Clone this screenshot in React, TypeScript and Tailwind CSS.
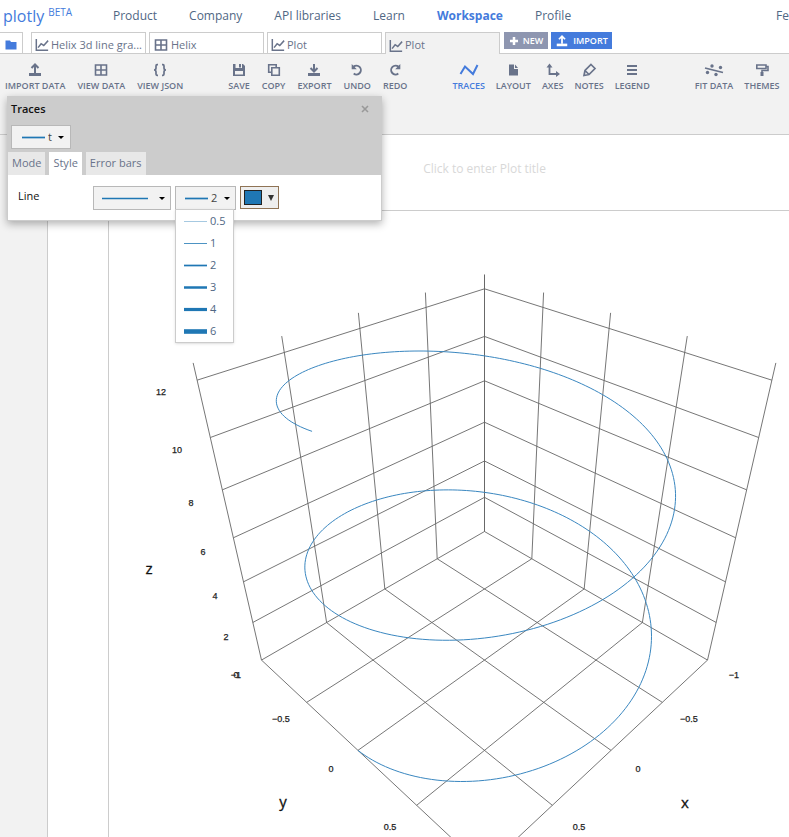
import React from "react";

/* ---------- icons ---------- */

type IconProps = { className?: string };

const Svg = ({ className = "w-4 h-4", box = "0 0 16 16", children }: { className?: string; box?: string; children: React.ReactNode }) => (
  <svg viewBox={box} className={className + " shrink-0"} fill="none" stroke="currentColor" strokeWidth="2" aria-hidden="true">
    {children}
  </svg>
);

const UploadIcon = ({ className }: IconProps) => (
  <Svg className={className}>
    <path d="M8 11V3M4.500 6L8 2.500L11.500 6" />
    <path d="M2 12.500H14" strokeWidth="3" />
  </Svg>
);
const DownloadIcon = () => (
  <Svg>
    <path d="M8 2V9M4.500 6L8 9.500L11.500 6" />
    <path d="M2 12.500H14" strokeWidth="3" />
  </Svg>
);
const GridIcon = ({ className }: IconProps) => (
  <Svg className={className}>
    <path d="M2.500 3H13.500V13H2.500ZM8 3V13M2.500 8H13.500" strokeWidth="1.600" />
  </Svg>
);
const BracesIcon = () => (
  <Svg>
    <path d="M6 2.700H5Q4 2.700 4 4V6Q4 8 2 8Q4 8 4 10V12Q4 13.300 5 13.300H6M10 2.700H11Q12 2.700 12 4V6Q12 8 14 8Q12 8 12 10V12Q12 13.300 11 13.300H10" strokeWidth="1.700" />
  </Svg>
);
const SaveIcon = () => (
  <Svg>
    <path fillRule="evenodd" fill="currentColor" stroke="none" d="M2 2H12L14 4V14H2ZM4 9V12.500H12V9ZM4.500 2V6H11V2Z" />
    <path fill="currentColor" stroke="none" d="M8 2H10V5.500H8Z" />
  </Svg>
);
const CopyIcon = () => (
  <Svg>
    <path d="M5.800 5.800H13.300V13.300H5.800ZM5.500 10.200H2.700V2.700H10.200V5.500" strokeWidth="1.600" />
  </Svg>
);
const UndoIcon = () => (
  <Svg>
    <path d="M4.500 4.800A4.400 4.400 0 1 1 4.700 11.500" strokeWidth="1.900" />
    <path d="M2.700 2V7.200H7.800Z" fill="currentColor" stroke="none" />
  </Svg>
);
const RedoIcon = () => (
  <Svg>
    <path d="M11.500 4.800A4.400 4.400 0 1 0 11.300 11.500" strokeWidth="1.900" />
    <path d="M13.300 2V7.200H8.200Z" fill="currentColor" stroke="none" />
  </Svg>
);
const TracesIcon = () => (
  <Svg className="w-5 h-4" box="0 0 20 16">
    <path d="M1.500 12L6 4.500L14 12L18.500 3" />
  </Svg>
);
const LayoutIcon = () => (
  <Svg>
    <path d="M4 2.500H9V7H13V13.500H4ZM10 2.500L13 6H10Z" fill="currentColor" stroke="none" />
  </Svg>
);
const AxesIcon = () => (
  <Svg>
    <path d="M4.500 4V12H12" strokeWidth="1.800" />
    <path d="M4.500 1.500L7.500 5.500H1.500ZM15 12L11 9V15Z" fill="currentColor" stroke="none" />
  </Svg>
);
const NotesIcon = () => (
  <Svg>
    <path d="M10 2.500L14 6.500L8 12.500L3 13.500L4 8.500ZM4 8.500L8 12.500" strokeWidth="1.700" />
  </Svg>
);
const LegendIcon = () => (
  <Svg>
    <path d="M3 4H13M3 8H13M3 12H13" strokeWidth="1.900" />
  </Svg>
);
const FitIcon = () => (
  <Svg className="w-5 h-4" box="0 0 20 16">
    <path d="M1 6L19 10.500" strokeWidth="1.800" />
    <g fill="currentColor" stroke="none">
      <circle cx="8" cy="4" r="1.700" />
      <circle cx="16.500" cy="5.500" r="1.700" />
      <circle cx="3.500" cy="10.500" r="1.700" />
      <circle cx="12" cy="12.500" r="1.700" />
    </g>
  </Svg>
);
const ThemesIcon = () => (
  <Svg>
    <path d="M2.800 3H12V6.500H2.800ZM12 4.500H14V8.500H8V11" strokeWidth="1.600" />
    <path d="M6.500 10H9.500V14H6.500Z" fill="currentColor" stroke="none" />
  </Svg>
);
const ChartIcon = () => (
  <Svg className="w-3.5 h-3.5">
    <path d="M1.500 1V14H15" strokeWidth="1.700" />
    <path d="M3.500 11L7 6.500L10 8.500L15 3" strokeWidth="1.700" />
  </Svg>
);

/* ---------- header ---------- */

const NavLink = ({ active, children }: { active?: boolean; children: string }) => (
  <a href="#" className={active ? "font-bold text-[#447bdc]" : "text-[#506784]"}>
    {children}
  </a>
);

const Header = () => (
  <header className="flex h-8 items-center overflow-hidden whitespace-nowrap pl-[3px] text-xs">
    <a href="#" className="flex w-[110px] shrink-0 items-center gap-1 text-[#447bdc]">
      <span className="text-base leading-8">plotly</span>
      <span className="pb-1.5 text-[10px]">BETA</span>
    </a>
    <nav className="flex gap-8">
      <NavLink>Product</NavLink>
      <NavLink>Company</NavLink>
      <NavLink>API libraries</NavLink>
      <NavLink>Learn</NavLink>
      <NavLink active>Workspace</NavLink>
      <NavLink>Profile</NavLink>
    </nav>
    <a href="#" className="ml-auto text-[#506784]">
      Fe
    </a>
  </header>
);

const FileTab = ({ icon, label, active }: { icon: React.ReactNode; label: string; active?: boolean }) => (
  <button
    className={
      "flex w-[115px] shrink-0 items-center gap-0.5 border border-b-0 border-[#ccc] px-[3px] pt-1 text-[11px] " +
      (active ? "-mb-px bg-[#f2f2f2]" : "bg-white")
    }
  >
    {icon}
    <span className="whitespace-nowrap">{label}</span>
  </button>
);

const FileTabs = () => (
  <div className="flex h-[22px] border-b border-[#ccc] text-[#69738a]">
    <button aria-label="Files" className="mr-2 flex w-[23px] shrink-0 items-center justify-center border border-b-0 border-l-0 border-[#ccc] pt-1 text-[#447bdc]">
      <svg viewBox="0 0 12 10" className="h-2.5 w-3" fill="currentColor" aria-hidden="true">
        <path d="M0.500 0.500H5L6 2H11.500V9.500H0.500Z" />
      </svg>
    </button>
    <div className="flex gap-[3px]">
      <FileTab icon={<ChartIcon />} label="Helix 3d line gra..." />
      <FileTab icon={<GridIcon className="h-4 w-4" />} label="Helix" />
      <FileTab icon={<ChartIcon />} label="Plot" />
      <FileTab icon={<ChartIcon />} label="Plot" active />
    </div>
    <div className="ml-1 flex h-[17px] gap-[3px] text-[9px] font-semibold text-white">
      <button className="flex w-11 items-center justify-center gap-1 bg-[#8e96b0] pt-px">
        <svg viewBox="0 0 10 10" className="h-2.5 w-2.5" stroke="currentColor" strokeWidth="2.500" aria-hidden="true">
          <path d="M5 1V9M1 5H9" />
        </svg>
        NEW
      </button>
      <button className="flex w-[61px] items-center justify-center gap-1 bg-[#447bdc] pt-px">
        <UploadIcon className="h-3.5 w-3.5" />
        IMPORT
      </button>
    </div>
  </div>
);

/* ---------- toolbar ---------- */

type Tool = { label: string; icon: React.ReactNode; active?: boolean };

const toolGroups: { gap: string; tools: Tool[] }[] = [
  {
    gap: "gap-3",
    tools: [
      { label: "IMPORT DATA", icon: <UploadIcon /> },
      { label: "VIEW DATA", icon: <GridIcon /> },
      { label: "VIEW JSON", icon: <BracesIcon /> },
    ],
  },
  {
    gap: "gap-3",
    tools: [
      { label: "SAVE", icon: <SaveIcon /> },
      { label: "COPY", icon: <CopyIcon /> },
      { label: "EXPORT", icon: <DownloadIcon /> },
      { label: "UNDO", icon: <UndoIcon /> },
      { label: "REDO", icon: <RedoIcon /> },
    ],
  },
  {
    gap: "gap-[11px]",
    tools: [
      { label: "TRACES", icon: <TracesIcon />, active: true },
      { label: "LAYOUT", icon: <LayoutIcon /> },
      { label: "AXES", icon: <AxesIcon /> },
      { label: "NOTES", icon: <NotesIcon /> },
      { label: "LEGEND", icon: <LegendIcon /> },
    ],
  },
  {
    gap: "gap-[11px]",
    tools: [
      { label: "FIT DATA", icon: <FitIcon /> },
      { label: "THEMES", icon: <ThemesIcon /> },
    ],
  },
];

const Toolbar = () => (
  <div className="flex h-[81px] items-start gap-[45px] overflow-hidden border-b border-[#ccc] bg-[#f2f2f2] pl-[5px] pt-2">
    {toolGroups.map((group, i) => (
      <div key={i} className={"flex " + group.gap}>
        {group.tools.map((tool) => (
          <button
            key={tool.label}
            className={
              "flex flex-col items-center gap-0.5 whitespace-nowrap text-[9px] font-semibold leading-3 " +
              (tool.active ? "text-[#447bdc]" : "text-[#69738a]")
            }
          >
            {tool.icon}
            {tool.label}
          </button>
        ))}
      </div>
    ))}
  </div>
);

/* ---------- traces panel ---------- */

const LineSample = ({ width, className = "w-[23px]" }: { width: number; className?: string }) => (
  <svg className={"h-[9px] shrink-0 " + className} aria-hidden="true">
    <line x1="0" x2="100%" y1="4.500" y2="4.500" stroke="#1f77b4" strokeWidth={width} />
  </svg>
);

const Caret = () => <span className="border-x-[3px] border-t-[3px] border-x-transparent border-t-black" />;

const lineWidths = [
  { value: "0.5", stroke: 0.4 },
  { value: "1", stroke: 0.8 },
  { value: "2", stroke: 1.7 },
  { value: "3", stroke: 2.5 },
  { value: "4", stroke: 3.2 },
  { value: "6", stroke: 4.6 },
];

const tabClass = "h-[23px] px-1 text-[11px] ";

const TracesPanel = () => (
  <section className="absolute left-[7px] top-24 z-10 w-[375px] border border-[#ccc] bg-white text-[11px] shadow-[0_3px_8px_rgba(0,0,0,0.3)]">
    <div className="bg-[#ccc] pl-[3px]">
      <div className="flex h-7 items-center justify-between pb-1 pr-3">
        <h2 className="font-semibold text-[#111]">Traces</h2>
        <button aria-label="Close" className="text-[#999]">
          <svg viewBox="0 0 8 8" className="h-2 w-2" stroke="currentColor" strokeWidth="1.600" aria-hidden="true">
            <path d="M1 1L7 7M7 1L1 7" />
          </svg>
        </button>
      </div>
      <label className="relative flex h-6 w-[60px] items-center border border-[#b8b8b8] bg-[#f2f2f2]">
        <span className="absolute left-2.5 flex">
          <LineSample width={1.7} />
        </span>
        <select aria-label="Trace" className="h-full w-full appearance-none pl-9 text-[11px] text-[#444]">
          <option>t</option>
        </select>
        <span className="pointer-events-none absolute right-1.5 flex">
          <Caret />
        </span>
      </label>
      <div className="-ml-[3px] flex gap-1 pt-[3px] text-[#69738a]">
        <button className={tabClass + "bg-[#e8e8e8]"}>Mode</button>
        <button className={tabClass + "bg-white"}>Style</button>
        <button className={tabClass + "bg-[#e8e8e8]"}>Error bars</button>
      </div>
    </div>
    <div className="flex h-[45px] items-start gap-1 pl-2.5 pt-[11px]">
      <span className="w-[71px] pt-0.5 text-[#111]">Line</span>
      <button aria-label="Line pattern" aria-haspopup="listbox" className="flex h-6 w-[78px] items-center justify-between border border-[#b8b8b8] bg-[#f2f2f2] pl-2 pr-[5px]">
        <LineSample width={1.7} className="w-[46px]" />
        <Caret />
      </button>
      <div className="relative">
        <button aria-haspopup="listbox" aria-expanded="true" className="flex h-6 w-[61px] items-center border border-[#b8b8b8] bg-[#f2f2f2] pl-[9px] pr-[5px] text-[#444]">
          <LineSample width={1.7} />
          <span className="ml-[3px] mr-auto">2</span>
          <Caret />
        </button>
        <ul role="listbox" aria-label="Line width" className="absolute left-0 top-[23px] w-[59px] border border-[#ccc] bg-white text-[#506784] shadow-sm">
          {lineWidths.map((w) => (
            <li key={w.value} role="option" aria-selected={w.value === "2"} className="flex h-[22px] items-center gap-[3px] pl-2">
              <LineSample width={w.stroke} />
              {w.value}
            </li>
          ))}
        </ul>
      </div>
      <button aria-label="Line color" className="flex h-[23px] w-[39px] items-center justify-between border border-[#8f7355] bg-[#eee] pl-[3px] pr-1">
        <span className="h-[15px] w-[18px] border border-[#222] bg-[#1f77b4]" />
        <span className="border-x-[3px] border-t-[6px] border-x-transparent border-t-[#333]" />
      </button>
    </div>
  </section>
);

/* ---------- 3d plot ---------- */

type Point = [number, number];

const Z_MAX = 4 * Math.PI;

// Perspective projection: x and y run from -1 to 1, z from 0 to Z_MAX.
const project = (x: number, y: number, z: number): Point => {
  const u = (x + 1) * 2;
  const v = (y + 1) * 2;
  const w = 1 - 0.048 * (u + v) - 0.01508 * z;
  return [484.5 + (45.05 * (v - u)) / w, (531.5 + 0.46 * (u + v) - 24.58 * z) / w];
};

const toPath = (points: Point[]) => "M" + points.map(([x, y]) => x.toFixed(2) + " " + y.toFixed(2)).join("L");

const steps = [-1, -0.5, 0, 0.5, 1];
const gridPaths = [
  ...steps.flatMap((s) => [
    toPath([project(s, 1, 0), project(s, -1, 0), project(s, -1, Z_MAX)]),
    toPath([project(1, s, 0), project(-1, s, 0), project(-1, s, Z_MAX)]),
  ]),
  ...[2, 4, 6, 8, 10, 12].map((z) => toPath([project(1, -1, z), project(-1, -1, z), project(-1, 1, z)])),
];

const helixPath = toPath(
  Array.from({ length: 401 }, (_, i) => {
    const t = (i / 400) * Z_MAX;
    return project(Math.cos(t), Math.sin(t), t);
  }),
);

const tickLabels: [number, number, string][] = [
  [161, 395, "12"],
  [177, 453, "10"],
  [191, 506, "8"],
  [203, 555, "6"],
  [215, 599, "4"],
  [226, 640, "2"],
  [236, 678, "0"],
  [236, 678, "−1"],
  [281, 722, "−0.5"],
  [331, 772, "0"],
  [390, 830, "0.5"],
  [734, 678, "−1"],
  [689, 722, "−0.5"],
  [638, 772, "0"],
  [579, 830, "0.5"],
];

const Plot = () => (
  <svg viewBox="109 211 680 626" className="block w-full" role="img" aria-label="Helix">
    <g fill="none" stroke="#666" strokeWidth="0.900">
      {gridPaths.map((d, i) => (
        <path key={i} d={d} />
      ))}
    </g>
    <path d={helixPath} fill="none" stroke="#3a87c0" strokeWidth="1" />
    <g textAnchor="middle" fill="#222" className="font-['Liberation_Sans',Arial,sans-serif] text-[9px]" stroke="#222" strokeWidth="0.250">
      {tickLabels.map(([x, y, label], i) => (
        <text key={i} x={x} y={y}>
          {label}
        </text>
      ))}
    </g>
    <g textAnchor="middle" fill="#111" stroke="#111" strokeWidth="0.300" className="text-[15px]">
      <text x="149" y="574">z</text>
      <text x="283" y="807">y</text>
      <text x="685" y="808">x</text>
    </g>
  </svg>
);

export default function App() {
  return (
    <div className="relative flex h-screen flex-col overflow-hidden bg-white font-['Open_Sans',sans-serif]">
      <Header />
      <FileTabs />
      <Toolbar />
      <TracesPanel />
      <main className="flex min-h-0 flex-1">
        <aside className="w-12 shrink-0 border-r border-[#ccc] bg-[#f2f2f2]" />
        <div className="flex min-w-0 flex-1 flex-col">
          <div className="flex h-[76px] shrink-0 items-center border-b border-[#ccc] pb-2 pl-[132px]">
            <input
              aria-label="Plot title"
              placeholder="Click to enter Plot title"
              className="w-full text-center text-xs placeholder:text-[#d8d8d8]"
            />
          </div>
          <div className="ml-[60px] min-h-0 flex-1 border-l border-[#ccc]">
            <Plot />
          </div>
        </div>
      </main>
    </div>
  );
}
